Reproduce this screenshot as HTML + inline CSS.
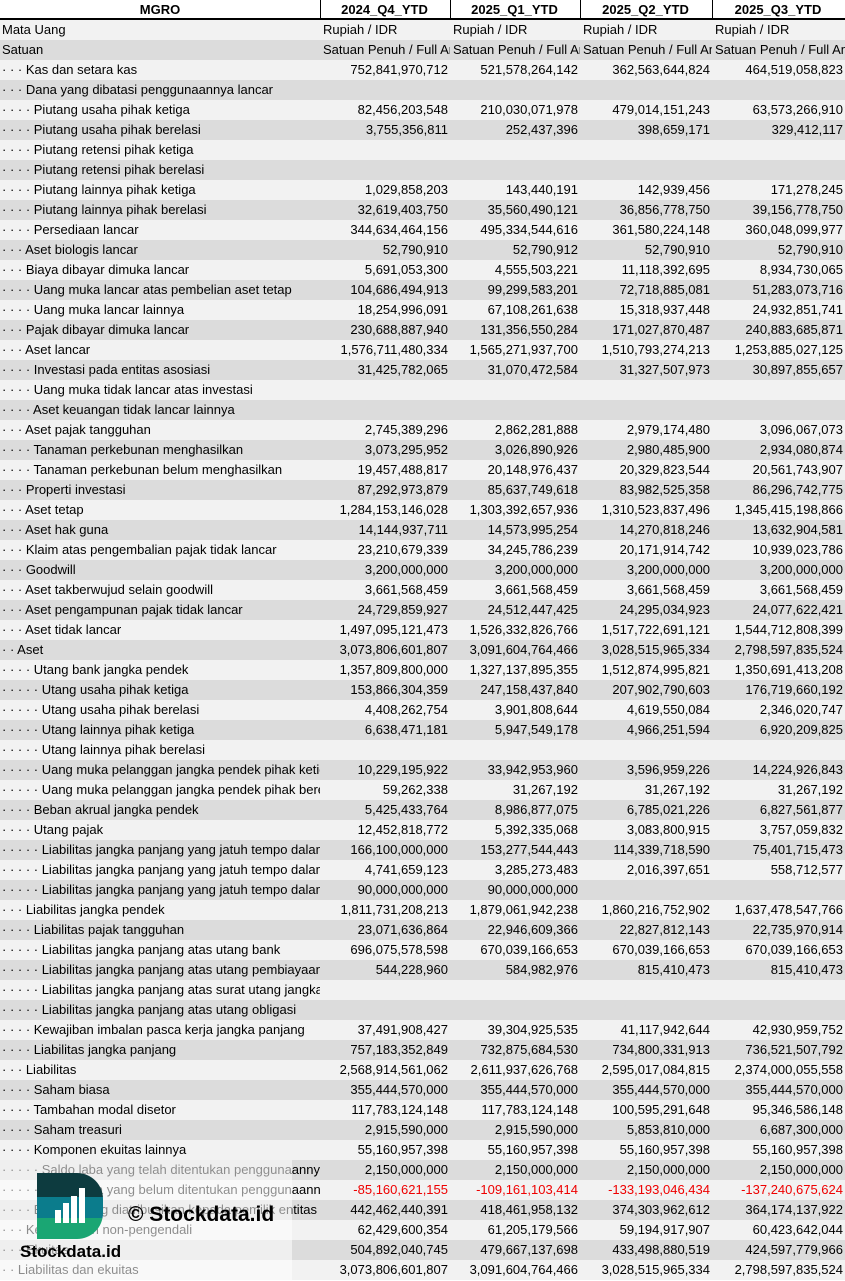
<!DOCTYPE html>
<html><head><meta charset="utf-8"><style>
*{margin:0;padding:0;box-sizing:border-box}
body{width:845px;height:1281px;overflow:hidden;background:#fff;font-family:"Liberation Sans",sans-serif;font-size:13px;color:#000;position:relative}
.r{display:flex;height:20px;line-height:20px;white-space:nowrap}
.r:nth-child(odd){background:#dcdcdc}
.r:nth-child(even){background:#f2f2f2}
.r span{display:block;overflow:hidden;text-align:right;padding-right:2px}
.r span:nth-child(1){width:320px;text-align:left;padding-left:2px}
.r span:nth-child(2){width:130px}
.r span:nth-child(3){width:130px}
.r span:nth-child(4){width:132px}
.r span:nth-child(5){width:133px}
.h{background:#fff!important;font-weight:bold;border-bottom:2px solid #000;height:20px;line-height:19px}
.h span{text-align:center!important;border-left:1px solid #000}
.h span:nth-child(1){border-left:none}
.t span{text-align:left!important;padding-left:3px}
.neg{color:#e00}
#wm{position:absolute;left:0;top:1160px;width:292px;height:121px;background:rgba(255,255,255,.55)}
#logo{position:absolute;left:37px;top:1173px;width:66px;height:66px;border-radius:0 26px 26px 0;background:linear-gradient(#0d3b3f 0,#0d3b3f 36%,#0b7c8c 36%,#0b7c8c 68%,#1aa673 68%);overflow:hidden}
#logo i{position:absolute;bottom:16px;width:6px;background:#fff}
#c{position:absolute;left:128px;top:1203px;font-weight:bold;font-size:21px}
#s{position:absolute;left:20px;top:1242px;font-weight:bold;font-size:17px}
</style></head><body>
<div id="t">
<div class="r h"><span>MGRO</span><span>2024_Q4_YTD</span><span>2025_Q1_YTD</span><span>2025_Q2_YTD</span><span>2025_Q3_YTD</span></div>
<div class="r t"><span>Mata Uang</span><span>Rupiah / IDR</span><span>Rupiah / IDR</span><span>Rupiah / IDR</span><span>Rupiah / IDR</span></div>
<div class="r t"><span>Satuan</span><span>Satuan Penuh / Full Amount</span><span>Satuan Penuh / Full Amount</span><span>Satuan Penuh / Full Amount</span><span>Satuan Penuh / Full Amount</span></div>
<div class="r"><span>· · · Kas dan setara kas</span><span>752,841,970,712</span><span>521,578,264,142</span><span>362,563,644,824</span><span>464,519,058,823</span></div>
<div class="r"><span>· · · Dana yang dibatasi penggunaannya lancar</span><span></span><span></span><span></span><span></span></div>
<div class="r"><span>· · · · Piutang usaha pihak ketiga</span><span>82,456,203,548</span><span>210,030,071,978</span><span>479,014,151,243</span><span>63,573,266,910</span></div>
<div class="r"><span>· · · · Piutang usaha pihak berelasi</span><span>3,755,356,811</span><span>252,437,396</span><span>398,659,171</span><span>329,412,117</span></div>
<div class="r"><span>· · · · Piutang retensi pihak ketiga</span><span></span><span></span><span></span><span></span></div>
<div class="r"><span>· · · · Piutang retensi pihak berelasi</span><span></span><span></span><span></span><span></span></div>
<div class="r"><span>· · · · Piutang lainnya pihak ketiga</span><span>1,029,858,203</span><span>143,440,191</span><span>142,939,456</span><span>171,278,245</span></div>
<div class="r"><span>· · · · Piutang lainnya pihak berelasi</span><span>32,619,403,750</span><span>35,560,490,121</span><span>36,856,778,750</span><span>39,156,778,750</span></div>
<div class="r"><span>· · · · Persediaan lancar</span><span>344,634,464,156</span><span>495,334,544,616</span><span>361,580,224,148</span><span>360,048,099,977</span></div>
<div class="r"><span>· · · Aset biologis lancar</span><span>52,790,910</span><span>52,790,912</span><span>52,790,910</span><span>52,790,910</span></div>
<div class="r"><span>· · · Biaya dibayar dimuka lancar</span><span>5,691,053,300</span><span>4,555,503,221</span><span>11,118,392,695</span><span>8,934,730,065</span></div>
<div class="r"><span>· · · · Uang muka lancar atas pembelian aset tetap</span><span>104,686,494,913</span><span>99,299,583,201</span><span>72,718,885,081</span><span>51,283,073,716</span></div>
<div class="r"><span>· · · · Uang muka lancar lainnya</span><span>18,254,996,091</span><span>67,108,261,638</span><span>15,318,937,448</span><span>24,932,851,741</span></div>
<div class="r"><span>· · · Pajak dibayar dimuka lancar</span><span>230,688,887,940</span><span>131,356,550,284</span><span>171,027,870,487</span><span>240,883,685,871</span></div>
<div class="r"><span>· · · Aset lancar</span><span>1,576,711,480,334</span><span>1,565,271,937,700</span><span>1,510,793,274,213</span><span>1,253,885,027,125</span></div>
<div class="r"><span>· · · · Investasi pada entitas asosiasi</span><span>31,425,782,065</span><span>31,070,472,584</span><span>31,327,507,973</span><span>30,897,855,657</span></div>
<div class="r"><span>· · · · Uang muka tidak lancar atas investasi</span><span></span><span></span><span></span><span></span></div>
<div class="r"><span>· · · · Aset keuangan tidak lancar lainnya</span><span></span><span></span><span></span><span></span></div>
<div class="r"><span>· · · Aset pajak tangguhan</span><span>2,745,389,296</span><span>2,862,281,888</span><span>2,979,174,480</span><span>3,096,067,073</span></div>
<div class="r"><span>· · · · Tanaman perkebunan menghasilkan</span><span>3,073,295,952</span><span>3,026,890,926</span><span>2,980,485,900</span><span>2,934,080,874</span></div>
<div class="r"><span>· · · · Tanaman perkebunan belum menghasilkan</span><span>19,457,488,817</span><span>20,148,976,437</span><span>20,329,823,544</span><span>20,561,743,907</span></div>
<div class="r"><span>· · · Properti investasi</span><span>87,292,973,879</span><span>85,637,749,618</span><span>83,982,525,358</span><span>86,296,742,775</span></div>
<div class="r"><span>· · · Aset tetap</span><span>1,284,153,146,028</span><span>1,303,392,657,936</span><span>1,310,523,837,496</span><span>1,345,415,198,866</span></div>
<div class="r"><span>· · · Aset hak guna</span><span>14,144,937,711</span><span>14,573,995,254</span><span>14,270,818,246</span><span>13,632,904,581</span></div>
<div class="r"><span>· · · Klaim atas pengembalian pajak tidak lancar</span><span>23,210,679,339</span><span>34,245,786,239</span><span>20,171,914,742</span><span>10,939,023,786</span></div>
<div class="r"><span>· · · Goodwill</span><span>3,200,000,000</span><span>3,200,000,000</span><span>3,200,000,000</span><span>3,200,000,000</span></div>
<div class="r"><span>· · · Aset takberwujud selain goodwill</span><span>3,661,568,459</span><span>3,661,568,459</span><span>3,661,568,459</span><span>3,661,568,459</span></div>
<div class="r"><span>· · · Aset pengampunan pajak tidak lancar</span><span>24,729,859,927</span><span>24,512,447,425</span><span>24,295,034,923</span><span>24,077,622,421</span></div>
<div class="r"><span>· · · Aset tidak lancar</span><span>1,497,095,121,473</span><span>1,526,332,826,766</span><span>1,517,722,691,121</span><span>1,544,712,808,399</span></div>
<div class="r"><span>· · Aset</span><span>3,073,806,601,807</span><span>3,091,604,764,466</span><span>3,028,515,965,334</span><span>2,798,597,835,524</span></div>
<div class="r"><span>· · · · Utang bank jangka pendek</span><span>1,357,809,800,000</span><span>1,327,137,895,355</span><span>1,512,874,995,821</span><span>1,350,691,413,208</span></div>
<div class="r"><span>· · · · · Utang usaha pihak ketiga</span><span>153,866,304,359</span><span>247,158,437,840</span><span>207,902,790,603</span><span>176,719,660,192</span></div>
<div class="r"><span>· · · · · Utang usaha pihak berelasi</span><span>4,408,262,754</span><span>3,901,808,644</span><span>4,619,550,084</span><span>2,346,020,747</span></div>
<div class="r"><span>· · · · · Utang lainnya pihak ketiga</span><span>6,638,471,181</span><span>5,947,549,178</span><span>4,966,251,594</span><span>6,920,209,825</span></div>
<div class="r"><span>· · · · · Utang lainnya pihak berelasi</span><span></span><span></span><span></span><span></span></div>
<div class="r"><span>· · · · · Uang muka pelanggan jangka pendek pihak ketiga</span><span>10,229,195,922</span><span>33,942,953,960</span><span>3,596,959,226</span><span>14,224,926,843</span></div>
<div class="r"><span>· · · · · Uang muka pelanggan jangka pendek pihak berelasi</span><span>59,262,338</span><span>31,267,192</span><span>31,267,192</span><span>31,267,192</span></div>
<div class="r"><span>· · · · Beban akrual jangka pendek</span><span>5,425,433,764</span><span>8,986,877,075</span><span>6,785,021,226</span><span>6,827,561,877</span></div>
<div class="r"><span>· · · · Utang pajak</span><span>12,452,818,772</span><span>5,392,335,068</span><span>3,083,800,915</span><span>3,757,059,832</span></div>
<div class="r"><span>· · · · · Liabilitas jangka panjang yang jatuh tempo dalam satu tahun</span><span>166,100,000,000</span><span>153,277,544,443</span><span>114,339,718,590</span><span>75,401,715,473</span></div>
<div class="r"><span>· · · · · Liabilitas jangka panjang yang jatuh tempo dalam satu tahun</span><span>4,741,659,123</span><span>3,285,273,483</span><span>2,016,397,651</span><span>558,712,577</span></div>
<div class="r"><span>· · · · · Liabilitas jangka panjang yang jatuh tempo dalam satu tahun</span><span>90,000,000,000</span><span>90,000,000,000</span><span></span><span></span></div>
<div class="r"><span>· · · Liabilitas jangka pendek</span><span>1,811,731,208,213</span><span>1,879,061,942,238</span><span>1,860,216,752,902</span><span>1,637,478,547,766</span></div>
<div class="r"><span>· · · · Liabilitas pajak tangguhan</span><span>23,071,636,864</span><span>22,946,609,366</span><span>22,827,812,143</span><span>22,735,970,914</span></div>
<div class="r"><span>· · · · · Liabilitas jangka panjang atas utang bank</span><span>696,075,578,598</span><span>670,039,166,653</span><span>670,039,166,653</span><span>670,039,166,653</span></div>
<div class="r"><span>· · · · · Liabilitas jangka panjang atas utang pembiayaan</span><span>544,228,960</span><span>584,982,976</span><span>815,410,473</span><span>815,410,473</span></div>
<div class="r"><span>· · · · · Liabilitas jangka panjang atas surat utang jangka menengah</span><span></span><span></span><span></span><span></span></div>
<div class="r"><span>· · · · · Liabilitas jangka panjang atas utang obligasi</span><span></span><span></span><span></span><span></span></div>
<div class="r"><span>· · · · Kewajiban imbalan pasca kerja jangka panjang</span><span>37,491,908,427</span><span>39,304,925,535</span><span>41,117,942,644</span><span>42,930,959,752</span></div>
<div class="r"><span>· · · · Liabilitas jangka panjang</span><span>757,183,352,849</span><span>732,875,684,530</span><span>734,800,331,913</span><span>736,521,507,792</span></div>
<div class="r"><span>· · · Liabilitas</span><span>2,568,914,561,062</span><span>2,611,937,626,768</span><span>2,595,017,084,815</span><span>2,374,000,055,558</span></div>
<div class="r"><span>· · · · Saham biasa</span><span>355,444,570,000</span><span>355,444,570,000</span><span>355,444,570,000</span><span>355,444,570,000</span></div>
<div class="r"><span>· · · · Tambahan modal disetor</span><span>117,783,124,148</span><span>117,783,124,148</span><span>100,595,291,648</span><span>95,346,586,148</span></div>
<div class="r"><span>· · · · Saham treasuri</span><span>2,915,590,000</span><span>2,915,590,000</span><span>5,853,810,000</span><span>6,687,300,000</span></div>
<div class="r"><span>· · · · Komponen ekuitas lainnya</span><span>55,160,957,398</span><span>55,160,957,398</span><span>55,160,957,398</span><span>55,160,957,398</span></div>
<div class="r"><span>· · · · · Saldo laba yang telah ditentukan penggunaannya</span><span>2,150,000,000</span><span>2,150,000,000</span><span>2,150,000,000</span><span>2,150,000,000</span></div>
<div class="r"><span>· · · · · Saldo laba yang belum ditentukan penggunaannya</span><span class="neg">-85,160,621,155</span><span class="neg">-109,161,103,414</span><span class="neg">-133,193,046,434</span><span class="neg">-137,240,675,624</span></div>
<div class="r"><span>· · · · Ekuitas yang diatribusikan kepada pemilik entitas induk</span><span>442,462,440,391</span><span>418,461,958,132</span><span>374,303,962,612</span><span>364,174,137,922</span></div>
<div class="r"><span>· · · Kepentingan non-pengendali</span><span>62,429,600,354</span><span>61,205,179,566</span><span>59,194,917,907</span><span>60,423,642,044</span></div>
<div class="r"><span>· · · Ekuitas</span><span>504,892,040,745</span><span>479,667,137,698</span><span>433,498,880,519</span><span>424,597,779,966</span></div>
<div class="r"><span>· · Liabilitas dan ekuitas</span><span>3,073,806,601,807</span><span>3,091,604,764,466</span><span>3,028,515,965,334</span><span>2,798,597,835,524</span></div>
</div>
<div id="wm"></div>
<div id="logo"><i style="left:18px;height:13px"></i><i style="left:26px;height:20px"></i><i style="left:34px;height:27px"></i><i style="left:42px;height:35px"></i></div>
<div id="c">© Stockdata.id</div>
<div id="s">Stockdata.id</div>
</body></html>
